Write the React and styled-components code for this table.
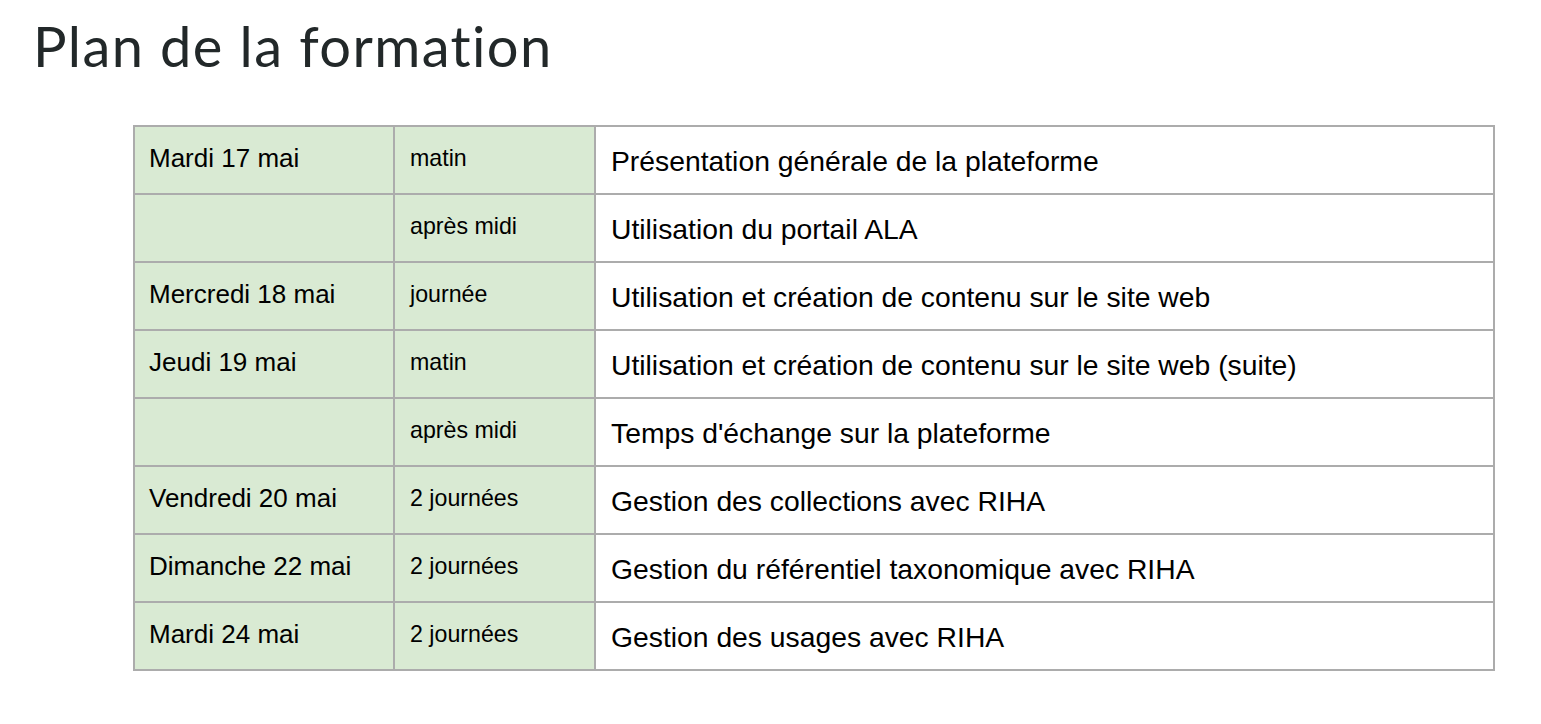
import React from "react";
import styled, { createGlobalStyle } from "styled-components";

const GlobalStyle = createGlobalStyle`
    body {
        margin: 0;
        background: #ffffff;
        font-family: "Liberation Sans", Arial, sans-serif;
    }
`;

const Page = styled.div`
    padding: 14px 0 0 33px;
`;

const Title = styled.h1`
    margin: 0;
    font-family: Lato, "Open Sans", sans-serif;
    font-size: 56px;
    font-weight: 400;
    line-height: 64px;
    letter-spacing: 1.4px;
    font-variant-ligatures: none;
    color: #222829;
`;

const Schedule = styled.table`
    margin: 47px 0 0 100px;
    width: 1360px;
    table-layout: fixed;
    border-collapse: collapse;
    border: 2px solid #acacac;
`;

const Row = styled.tr`
    height: 68px;
`;

const sizes = {
    day: { font: 26, line: 30, pad: 16, left: 14 },
    slot: { font: 23.2, line: 28, pad: 17, left: 15 },
    topic: { font: 28.3, line: 32, pad: 18, left: 15 },
};

const Cell = styled.td`
    box-sizing: border-box;
    vertical-align: top;
    border: 2px solid #acacac;
    padding: ${(p) => sizes[p.$kind].pad}px 16px 0 ${(p) => sizes[p.$kind].left}px;
    font-size: ${(p) => sizes[p.$kind].font}px;
    line-height: ${(p) => sizes[p.$kind].line}px;
    color: #000000;
    background: ${(p) => (p.$kind === "topic" ? "#ffffff" : "#d9ead3")};
    white-space: nowrap;
`;

const rows = [
    ["Mardi 17 mai", "matin", "Présentation générale de la plateforme"],
    ["", "après midi", "Utilisation du portail ALA"],
    ["Mercredi 18 mai", "journée", "Utilisation et création de contenu sur le site web"],
    ["Jeudi 19 mai", "matin", "Utilisation et création de contenu sur le site web (suite)"],
    ["", "après midi", "Temps d'échange sur la plateforme"],
    ["Vendredi 20 mai", "2 journées", "Gestion des collections avec RIHA"],
    ["Dimanche 22 mai", "2 journées", "Gestion du référentiel taxonomique avec RIHA"],
    ["Mardi 24 mai", "2 journées", "Gestion des usages avec RIHA"],
];

export default function App() {
    return (
        <Page>
            <GlobalStyle />
            <Title>Plan de la formation</Title>
            <Schedule>
                <colgroup>
                    <col style={{ width: 260 }} />
                    <col style={{ width: 201 }} />
                    <col style={{ width: 899 }} />
                </colgroup>
                <tbody>
                    {rows.map(([day, slot, topic], i) => (
                        <Row key={i}>
                            <Cell $kind="day">{day}</Cell>
                            <Cell $kind="slot">{slot}</Cell>
                            <Cell $kind="topic">{topic}</Cell>
                        </Row>
                    ))}
                </tbody>
            </Schedule>
        </Page>
    );
}
